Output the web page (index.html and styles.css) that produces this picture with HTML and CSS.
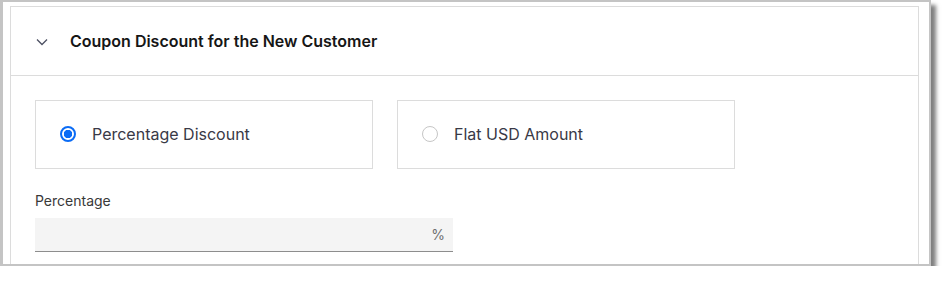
FILE: index.html
```html
<!DOCTYPE html>
<html lang="en">
<head>
  <meta charset="UTF-8">
  <title>Coupon Discount</title>
  <link rel="stylesheet" href="styles.css">
</head>
<body>
  <div class="frame">
    <div class="card">
      <div class="card-header">
        <svg class="chevron" width="12" height="8" viewBox="0 0 12 8">
          <path d="M1 1.5 L6 6.5 L11 1.5" fill="none" stroke="#4d5163" stroke-width="1.3"/>
        </svg>
        <h2 class="card-title">Coupon Discount for the New Customer</h2>
      </div>
      <div class="card-body">
        <div class="tiles">
          <label class="tile">
            <span class="radio checked"></span>
            <span class="tile-text">Percentage Discount</span>
          </label>
          <label class="tile">
            <span class="radio"></span>
            <span class="tile-text">Flat USD Amount</span>
          </label>
        </div>
        <div class="field">
          <div class="field-label">Percentage</div>
          <div class="input">
            <span class="suffix">%</span>
          </div>
        </div>
      </div>
    </div>
  </div>
</body>
</html>
```

FILE: styles.css
```css
body {
  margin: 0;
  background-color: white;
  font-family: Inter, 'Noto Sans', sans-serif;
}
.frame {
  box-sizing: border-box;
  width: 931px;
  height: 266px;
  border: 2px solid #c4c4c4;
  border-left-width: 3px;
  padding: 4px 10px 0 7px;
  background-color: white;
  box-shadow: 5px 5px 4px rgba(0,0,0,0.5);
  overflow: hidden;
}
.card {
  border: 1px solid #dcdcdc;
  height: 300px;
}
.card-header {
  display: flex;
  align-items: center;
  height: 68px;
  border-bottom: 1px solid #dcdcdc;
}
.chevron {
  margin-left: 25px;
  margin-right: 22px;
  margin-top: 1px;
}
.card-title {
  margin: 0;
  font-size: 16px;
  font-weight: 600;
  color: #161616;
}
.card-body {
  padding: 24px 0 0 24px;
}
.tiles {
  display: flex;
  gap: 24px;
}
.tile {
  box-sizing: border-box;
  width: 338px;
  height: 69px;
  border: 1px solid #dcdcdc;
  display: flex;
  align-items: center;
  padding-left: 24px;
  padding-bottom: 1px;
  gap: 16px;
}
.radio {
  box-sizing: border-box;
  width: 16px;
  height: 16px;
  border-radius: 50%;
  border: 1px solid #c6c6c6;
}
.radio.checked {
  border: 2px solid #0b6cf5;
  background: radial-gradient(circle, #0b6cf5 0 4px, white 4.5px);
}
.tile-text {
  font-size: 16px;
  color: #393946;
}
.field {
  margin-top: 23px;
}
.field-label {
  font-size: 14px;
  line-height: 18px;
  color: #393939;
  margin-bottom: 8px;
}
.input {
  box-sizing: border-box;
  width: 418px;
  height: 34px;
  background-color: #f4f4f4;
  border-bottom: 1px solid #8d8d8d;
  display: flex;
  align-items: center;
  justify-content: flex-end;
  padding-right: 8px;
}
.suffix {
  font-size: 14px;
  color: #6f6f6f;
}
```
